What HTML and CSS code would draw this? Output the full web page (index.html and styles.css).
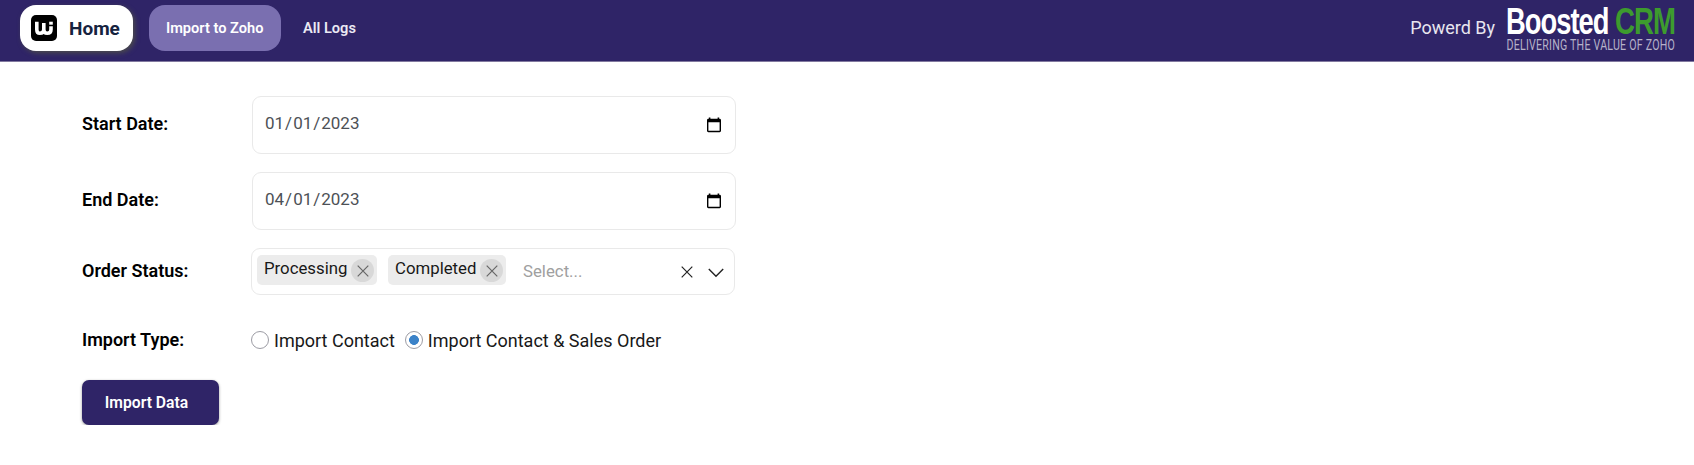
FILE: index.html
```html
<!DOCTYPE html>
<html lang="en">
<head>
<meta charset="utf-8">
<title>Import to Zoho</title>
<link rel="stylesheet" href="styles.css">
</head>
<body>
<header class="topbar">
  <nav class="nav">
    <a class="home"><svg class="mark" viewBox="0 0 26 26"><rect width="26" height="26" rx="5"/><path class="mark-w" d="M5.8 6.7V14.4Q5.8 18.2 8.8 18.2Q12.8 18.2 12.8 14.4V8M12.8 14.4Q12.8 18.2 16.2 18.2Q20 18.2 20 14.4V11.3"/><path class="mark-dot" d="M18.2 6.7h3.6v3h-3.6z"/></svg><span>Home</span></a>
    <a class="tab active"><span>Import to Zoho</span></a>
    <a class="tab"><span>All Logs</span></a>
  </nav>
  <div class="brand">
    <span class="powered">Powerd By</span>
    <svg class="logo" viewBox="0 0 170 46">
      <text class="logo-name" x="-1" y="27.8" textLength="102.5" lengthAdjust="spacingAndGlyphs">Boosted</text>
      <text class="logo-crm" x="108" y="27.8" textLength="60" lengthAdjust="spacingAndGlyphs">CRM</text>
      <text class="logo-tag" x="-.5" y="43.5" textLength="168.5" lengthAdjust="spacingAndGlyphs">DELIVERING THE VALUE OF ZOHO</text>
    </svg>
  </div>
</header>
<main class="form">
  <div class="row date-row">
    <span class="label">Start Date:</span>
    <div class="field"><span class="date">01<i>/</i>01<i>/</i>2023</span><svg class="cal" viewBox="0 0 14 16"><path d="M1.8 0.5h1.6v1.3h7.2V0.5h1.6v1.3h.3Q14 1.8 14 3.2V13.8Q14 15.2 12.6 15.2H1.4Q0 15.2 0 13.8V3.2Q0 1.8 1.4 1.8h.4zM1.4 5.3v8.5h11.2V5.3z" fill-rule="evenodd"/></svg></div>
  </div>
  <div class="row date-row">
    <span class="label">End Date:</span>
    <div class="field"><span class="date">04<i>/</i>01<i>/</i>2023</span><svg class="cal" viewBox="0 0 14 16"><path d="M1.8 0.5h1.6v1.3h7.2V0.5h1.6v1.3h.3Q14 1.8 14 3.2V13.8Q14 15.2 12.6 15.2H1.4Q0 15.2 0 13.8V3.2Q0 1.8 1.4 1.8h.4zM1.4 5.3v8.5h11.2V5.3z" fill-rule="evenodd"/></svg></div>
  </div>
  <div class="row status-row">
    <span class="label">Order Status:</span>
    <div class="select">
      <span class="chip"><span class="chip-text">Processing</span><span class="chip-x"><svg viewBox="0 0 12 12"><path d="M.7.7l10.6 10.6M11.3.7L.7 11.3"/></svg></span></span>
      <span class="chip"><span class="chip-text">Completed</span><span class="chip-x"><svg viewBox="0 0 12 12"><path d="M.7.7l10.6 10.6M11.3.7L.7 11.3"/></svg></span></span>
      <span class="placeholder">Select...</span>
      <svg class="clear" viewBox="0 0 12 12"><path d="M.7.7l10.6 10.6M11.3.7L.7 11.3"/></svg>
      <svg class="chevron" viewBox="0 0 16 10"><path d="M.8 1L8 8.3 15.2 1"/></svg>
    </div>
  </div>
  <div class="row type-row">
    <span class="label">Import Type:</span>
    <span class="radio"></span><span class="option first">Import Contact</span>
    <span class="radio checked"></span><span class="option">Import Contact &amp; Sales Order</span>
  </div>
  <button class="submit">Import Data</button>
</main>
</body>
</html>
```
FILE: styles.css
```css
* { box-sizing: border-box; }
body { margin: 0; background: #fff; color: #000; font-family: Roboto, "Liberation Sans", sans-serif; }
svg { display: block; flex: none; }
.topbar { display: flex; justify-content: space-between; height: 62px; background: #2f2467; border-bottom: 1px solid #81799f; }
.nav { display: flex; padding: 5px 0 0 20px; }
.home, .tab { display: flex; align-items: center; height: 46px; border-radius: 16px; white-space: nowrap; }
.home { width: 113px; padding-left: 11px; background: #fff; color: #16233f; font-size: 19px; font-weight: 700; box-shadow: 2px 2px 5px #4b4b4b; margin-right: 16px; }
.mark { width: 26px; height: 26px; margin-right: 12px; }
.mark-w { fill: none; stroke: #fff; stroke-width: 3.6; }
.mark-dot { fill: #fff; }
.tab { width: 132px; padding-left: 17px; color: #ebe9f3; font-size: 14.6px; font-weight: 600; }
.tab.active { background: #7a6fb0; color: #fff; margin-right: 5px; }
.brand { display: flex; padding-right: 17px; }
.powered { color: #e8e6ef; font-size: 18px; line-height: 55px; margin-right: 12px; }
.logo { width: 170px; height: 46px; margin-top: 6px; overflow: visible; font-family: "Liberation Sans", sans-serif; }
.logo-name, .logo-crm { font-size: 37px; font-weight: 700; fill: #fff; letter-spacing: -1.3px; }
.logo-crm { fill: #3d9b2e; }
.logo-tag { font-family: Roboto, sans-serif; font-size: 14px; fill: #b6b2c9; letter-spacing: .3px; }
.form { padding: 34px 0 0 82px; }
.row { display: flex; align-items: center; }
.label { width: 170px; font-size: 18px; font-weight: 600; white-space: nowrap; }
.date-row { height: 58px; margin-bottom: 18px; }
.date-row .label { padding-bottom: 3px; }
.field { display: flex; align-items: center; justify-content: space-between; width: 484px; height: 58px; padding: 0 14px 0 12px; border: 1px solid #e9e9e9; border-radius: 9px; }
.date { color: #4d5156; font-size: 17px; padding-bottom: 4px; }
.date i { font-style: normal; padding: 0 1px; }
.cal { width: 14px; height: 16px; }
.status-row { height: 47px; }
.status-row .label, .type-row .label { width: 169px; padding-bottom: 2px; }
.select { display: flex; width: 484px; height: 47px; padding: 6px 10px 0 5px; border: 1px solid #e9e9e9; border-radius: 9px; }
.chip { display: flex; height: 30px; width: 120px; padding: 4px 3px 0 7px; margin-right: 11px; border-radius: 5px; background: #ececec; justify-content: space-between; }
.chip:nth-child(2) { width: 118px; }
.chip-text { font-size: 16.8px; line-height: 19px; color: #181818; }
.chip-x { display: flex; align-items: center; justify-content: center; flex: none; width: 23px; height: 23px; border-radius: 50%; background: #d8d8d8; }
.chip-x svg { width: 12px; height: 12px; stroke: #666; stroke-width: 1.2; }
.placeholder { font-size: 16.8px; line-height: 32px; color: #a0a0a0; margin-left: 6px; }
.clear { width: 12px; height: 12px; margin: 11px 15px 0 auto; stroke: #222; stroke-width: 1.2; }
.chevron { width: 16px; height: 10px; margin-top: 13px; fill: none; stroke: #222; stroke-width: 1.4; }
.type-row { height: 20px; margin-top: 35px; }
.radio { flex: none; width: 18px; height: 18px; border: 1px solid #9c9ca4; border-radius: 50%; margin-right: 5px; }
.radio.checked { background: radial-gradient(circle, #3b82c8 0 4.6px, #fff 5.2px); }
.option { font-size: 18px; color: #181818; white-space: nowrap; }
.option.first { margin-right: 10px; }
.submit { display: block; width: 137px; height: 45px; margin-top: 30px; padding: 0 8px 0 0; border: 0; border-radius: 7px; background: #2f2467; color: #fff; font: 600 15.7px Roboto, sans-serif; box-shadow: 0 1px 3px rgba(0,0,0,.4); }
```
